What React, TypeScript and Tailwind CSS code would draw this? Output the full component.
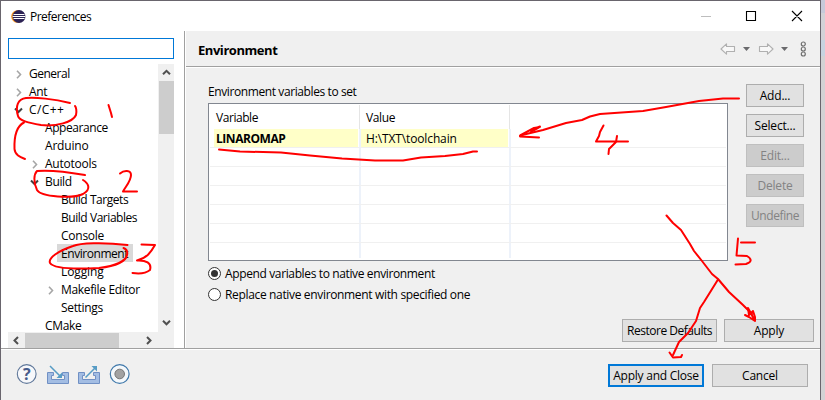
import React from "react";

type Row = {
  label: string;
  indent: string;
  spacing: string;
  arrow?: "closed" | "open";
  selected?: boolean;
};

const rows: Row[] = [
  { label: "General", indent: "pl-[6px]", spacing: "tracking-[-0.5px]", arrow: "closed" },
  { label: "Ant", indent: "pl-[6px]", spacing: "tracking-[-0.34px]", arrow: "closed" },
  { label: "C/C++", indent: "pl-[6px]", spacing: "tracking-[0.4px]", arrow: "open" },
  { label: "Appearance", indent: "pl-[22px]", spacing: "tracking-[-0.42px]" },
  { label: "Arduino", indent: "pl-[22px]", spacing: "tracking-[-0.2px]" },
  { label: "Autotools", indent: "pl-[22px]", spacing: "tracking-[-0.25px]", arrow: "closed" },
  { label: "Build", indent: "pl-[22px]", spacing: "tracking-[-0.34px]", arrow: "open" },
  { label: "Build Targets", indent: "pl-[38px]", spacing: "tracking-[-0.45px]" },
  { label: "Build Variables", indent: "pl-[38px]", spacing: "tracking-[-0.45px]" },
  { label: "Console", indent: "pl-[38px]", spacing: "tracking-[-0.25px]" },
  { label: "Environment", indent: "pl-[38px]", spacing: "tracking-[-0.45px]", selected: true },
  { label: "Logging", indent: "pl-[38px]", spacing: "tracking-[-0.1px]" },
  { label: "Makefile Editor", indent: "pl-[38px]", spacing: "tracking-[-0.34px]", arrow: "closed" },
  { label: "Settings", indent: "pl-[38px]", spacing: "tracking-[-0.34px]" },
  { label: "CMake", indent: "pl-[22px]", spacing: "tracking-[-0.34px]" },
];

function Chevron({ d, color = "#505050", width = 2 }: { d: string; color?: string; width?: number }) {
  return (
    <svg width="9" height="9" viewBox="0 0 9 9" fill="none" stroke={color} strokeWidth={width} className="shrink-0">
      <path d={d} />
    </svg>
  );
}

function Tree() {
  return (
    <div className="h-[268px] w-[150px] overflow-hidden">
      {rows.map((r) => (
        <div key={r.label} className={`flex h-[18px] items-center ${r.indent}`}>
          <div className="flex w-[11px] shrink-0 pt-[2px]">
            {r.arrow === "closed" && <Chevron d="M3 0.8 L6.5 4.5 L3 8.2" color="#a6a6a6" width={1.6} />}
            {r.arrow === "open" && <Chevron d="M1 2.5 L4.5 6 L8 2.5" color="#404040" />}
          </div>
          <div
            className={`flex h-[18px] items-center whitespace-nowrap px-1 pt-[2px] ${r.spacing} ${
              r.selected ? "w-[76px] bg-[#d9d9d9]" : ""
            }`}
          >
            {r.label}
          </div>
        </div>
      ))}
    </div>
  );
}

function Sidebar() {
  return (
    <div className="flex h-[317px] w-[183px] shrink-0 flex-col bg-white pl-[7px] pt-[7px]">
      <div className="h-[21px] w-[166px] shrink-0 border border-[#0078d7] bg-white" />
      <div className="mt-[5px] flex">
        <Tree />
        <div className="flex h-[268px] w-4 flex-col items-center bg-[#f0f0f0]">
          <div className="flex h-[17px] items-center">
            <Chevron d="M1 6.3 L4.5 2.8 L8 6.3" />
          </div>
          <div className="h-[53px] w-[15px] bg-[#cdcdcd]" />
          <div className="mb-[5px] mt-auto">
            <Chevron d="M1 2.8 L4.5 6.3 L8 2.8" />
          </div>
        </div>
      </div>
      <div className="flex h-4 w-[166px] items-center bg-[#f0f0f0]">
        <div className="flex w-[17px] pl-[4px]">
          <Chevron d="M6 1 L2.5 4.5 L6 8" />
        </div>
        <div className="h-[15px] w-[94px] bg-[#cdcdcd]" />
        <div className="ml-[25px]">
          <Chevron d="M3 1 L6.5 4.5 L3 8" />
        </div>
      </div>
    </div>
  );
}

function Button({ children, className = "" }: { children: React.ReactNode; className?: string }) {
  return (
    <button
      className={`flex h-[23px] shrink-0 items-center justify-center whitespace-nowrap border pt-px ${className}`}
    >
      {children}
    </button>
  );
}

function Toolbar() {
  return (
    <svg width="90" height="18" viewBox="0 0 90 18" fill="none">
      <g fill="#f8f8f8" stroke="#b0b0b0" strokeWidth="1.1" strokeLinejoin="round">
        <path d="M1 9 L6.5 3.8 V6.5 H14.5 V11.5 H6.5 V14.2 Z" />
        <path d="M53 9 L47.5 3.8 V6.5 H39.5 V11.5 H47.5 V14.2 Z" />
      </g>
      <path d="M23 7 H30 L26.5 11 Z M61 7 H68 L64.500 11 Z" fill="#6a6a6d" />
      <g stroke="#707070" strokeWidth="1.2">
        <circle cx="83.300" cy="4" r="2" />
        <circle cx="83.300" cy="9" r="2" />
        <circle cx="83.300" cy="14" r="2" />
      </g>
    </svg>
  );
}

function VariableTable() {
  return (
    <div className="flex h-[158px] w-[520px] flex-col border border-[#828790] bg-white">
      <div className="flex h-[25px] items-center pl-[5px]">
        <div className="mt-[1px] flex h-6 w-[146px] items-center border-r border-[#e5e5e5] pl-[2px] pt-px tracking-[-0.45px]">Variable</div>
        <div className="mt-[1px] flex h-6 w-[150px] items-center border-r border-[#e5e5e5] pl-[6px] pt-px tracking-[-0.35px]">Value</div>
      </div>
      <div className="mx-px flex h-[19px] border-b border-[#f0f0f0]">
        <div className="ml-1 flex w-[147px] border-r-2 border-[#edf2fa]">
          <div className="flex w-[144px] items-center bg-[#ffffc8] pl-[2px] pt-[2px] font-bold tracking-[-0.45px]">LINAROMAP</div>
        </div>
        <div className="flex w-[150px] border-r-2 border-[#edf2fa]">
          <div className="flex w-[147px] items-center bg-[#ffffc8] pl-[5px] pt-[2px] tracking-[-0.13px]">H:\TXT\toolchain</div>
        </div>
      </div>
      {[0, 1, 2, 3, 4].map((n) => (
        <div key={n} className="mx-px flex h-[19px] border-b border-[#f0f0f0]">
          <div className="w-[151px] border-r-2 border-[#edf2fa]" />
          <div className="w-[150px] border-r-2 border-[#edf2fa]" />
        </div>
      ))}
      <div className="mx-px flex h-[15px]">
        <div className="w-[151px] border-r-2 border-[#edf2fa]" />
        <div className="w-[150px] border-r-2 border-[#edf2fa]" />
      </div>
    </div>
  );
}

function Radio({ label, checked, spacing }: { label: string; checked?: boolean; spacing: string }) {
  return (
    <div className="flex h-[21px] items-center">
      <div className="flex size-[13px] items-center justify-center rounded-full border border-[#333] bg-white">
        {checked && <div className="size-[7px] rounded-full bg-[#333]" />}
      </div>
      <span className={`ml-[4px] whitespace-nowrap pt-px ${spacing}`}>{label}</span>
    </div>
  );
}

const normal = "border-[#adadad] bg-[#e1e1e1]";
const disabled = "border-[#bfbfbf] bg-[#cccccc] text-[#838383]";

function EnvironmentPage() {
  return (
    <div className="flex h-[317px] w-[634px] flex-col">
      <div className="flex h-9 items-center justify-between border-b border-[#a0a0a0] pl-3 pr-[10px]">
        <span className="pt-[3px] text-[13px] font-bold tracking-[-0.45px]">Environment</span>
        <Toolbar />
      </div>
      <div className="h-px bg-white" />
      <div className="flex pl-[22px]">
        <div className="flex w-[520px] flex-col pt-[13px]">
          <span className="flex h-[22px] items-center tracking-[-0.4px]">Environment variables to set</span>
          <VariableTable />
          <div className="mt-[2px]">
            <Radio label="Append variables to native environment" checked spacing="tracking-[-0.37px]" />
            <Radio label="Replace native environment with specified one" spacing="tracking-[-0.34px]" />
          </div>
        </div>
        <div className="ml-[18px] mt-4 flex w-[58px] flex-col gap-[7px]">
          <Button className={normal}>Add...</Button>
          <Button className={normal}>Select...</Button>
          <Button className={disabled}>Edit...</Button>
          <Button className={disabled}>Delete</Button>
          <Button className={`tracking-[-0.4px] ${disabled}`}>Undefine</Button>
        </div>
      </div>
      <div className="mb-[6px] mr-[6px] mt-auto flex justify-end gap-[7px]">
        <Button className={`w-[95px] tracking-[-0.48px] ${normal}`}>Restore Defaults</Button>
        <Button className={`w-[90px] ${normal}`}>Apply</Button>
      </div>
    </div>
  );
}

function FooterIcons() {
  return (
    <svg width="116" height="24" viewBox="0 0 116 24" fill="none" className="shrink-0">
      <circle cx="10.700" cy="12" r="9.400" fill="#f7f8fb" stroke="#60789a" strokeWidth="1.1" />
      <text x="10.700" y="17.500" textAnchor="middle" fontSize="16" fontWeight="700" fill="#465b8b">?</text>
      <g fill="#a3bde3" stroke="#7090c4">
        <path d="M31.500 10.500 H37.500 V13.500 H35.500 V17.500 H48.500 V13.500 H46.500 V10.500 H52.500 V21.500 H31.500 Z" />
        <path d="M62.500 10.500 H68.500 V13.500 H66.500 V17.500 H79.500 V13.500 H77.500 V10.500 H83.500 V21.500 H62.500 Z" />
      </g>
      <path d="M34 4 L44 14 M69.500 15.500 L79 6" stroke="#579cc5" strokeWidth="1.500" />
      <path d="M46 10.500 V16 H40.500 Z M75.500 4 H81 V9.500 Z" fill="#579cc5" />
      <circle cx="103.700" cy="12" r="9.400" fill="#f4f8fb" stroke="#3f78aa" strokeWidth="1.200" />
      <circle cx="103.700" cy="12" r="4.800" fill="#a2a2a2" stroke="#777" />
    </svg>
  );
}

function Footer() {
  return (
    <div className="flex h-[52px] flex-col border-t border-[#a0a0a0]">
      <div className="h-px shrink-0 bg-white" />
      <div className="flex items-start pl-[15px] pr-3 pt-[12px]">
        <FooterIcons />
        <div className="ml-auto mt-[2px] flex gap-2">
          <Button className="w-24 border-2 border-[#0078d7] bg-[#e1e1e1] tracking-[-0.25px]">Apply and Close</Button>
          <Button className={`w-24 ${normal}`}>Cancel</Button>
        </div>
      </div>
    </div>
  );
}

function TitleBar() {
  return (
    <div className="flex h-[30px] shrink-0 items-center bg-white pl-[10px] pr-[17px]">
      <svg width="15" height="15" viewBox="0 0 15 15">
        <circle cx="6.500" cy="7.500" r="6.300" fill="#f7941e" />
        <circle cx="8" cy="7.500" r="6.500" fill="#2c2255" />
        <path d="M2.500 5.500 H13.500 M1.500 7.500 H14.500 M2.500 9.500 H13.500" stroke="#fff" strokeWidth="1" />
      </svg>
      <span className="ml-[4px] pt-px tracking-[-0.52px]">Preferences</span>
      <svg width="102" height="12" viewBox="0 0 102 12" className="ml-auto" fill="none">
        <path d="M0 6.500 H10" stroke="#bdbdbd" />
        <path d="M45.500 1.500 H54.500 V10.500 H45.500 Z M91 1 L101 11 M101 1 L91 11" stroke="#000" strokeWidth="1.100" />
      </svg>
    </div>
  );
}

function Annotations() {
  return (
    <svg
      className="pointer-events-none absolute inset-0"
      width="825"
      height="400"
      viewBox="0 0 825 400"
      fill="none"
      stroke="#ff0000"
      strokeWidth="2"
      strokeLinecap="round"
      strokeLinejoin="round"
    >
      <path d="M70 103 C54 99 35 97 26 98 C18 99 15 106 18 116 C19 121 30 123 41 125 C56 127 73 122 76 115 C77 111 76 107 75 106" />
      <path d="M108.500 105 L111 113 L112 117" />
      <path d="M24 122.500 C17 126 14 135 14.500 149 C15 155 20 157 25 159" />
      <path d="M85 175 C68 172 48 170 37 171 C34 174 33 182 37 190 C41 197 73 199 83 194 C92 189 88 183 83 180" />
      <path d="M120 173.500 C124 170 131 170 131 175 C131 181 126 186 123 191.500 L137 191.500" />
      <path d="M127.500 245 C103 242 80 243 73 246 C58 251 48 258 50 263 C54 269 80 269 99 268 C116 266 126 261 127 255 C128 251 126 249 123.500 248" />
      <path d="M141.500 244.500 L155 245 C151 252 147 258 137 260.500 C146 260 152 263 150 270 C145 274 139 274 132.500 273" />
      <path d="M219 149.500 L240 151.500 L281 152.500 L310 155.500 L342 158.500 L375 160.500 H403 L421 157.500 L445 156 L463 154 L473 151.500 H477" />
      <path d="M739 98.500 H723 L699 101 L666 107 L643 111 L600 114 L590 116.500 L582 120 L566 123 L543 130 L520 135.500" />
      <path d="M540 126.500 L528 131 L520 136.500 L539 137.500 M521 135 L534 128 L540 127 L531 132" />
      <path d="M603.500 125.500 L600 132 L599 136 L596 141.500 H628 M617 136 L616 142 L609 149 L608.500 154" />
      <path d="M666.500 215.500 L673 223 L681 230 L690 244 L694 251 L702 261 L712 274 L718 279 L729 292 L743 305 L752 314" />
      <path d="M745 315 L749 317 L755 321 L748 308 L749 315 L753 311 L755 317 V321" />
      <path d="M718 279.500 L704 302 L700 308 L696 321 L688 333 L679 342 L673 355" />
      <path d="M669.500 352.500 L673 357.500 L681 357 L682 355" />
      <path d="M738 238.500 L736.500 255.500 L747 256 C752 259 752 262 746 264 L735.500 264.500 M741 242.500 H755" />
    </svg>
  );
}

export default function App() {
  return (
    <div className="relative flex h-[400px] w-[825px] overflow-hidden bg-[#f0f0f0] font-['Open_Sans','Noto_Sans',sans-serif] text-[12px] leading-4 tracking-[-0.2px] text-black">
      <div className="flex h-[400px] w-[821px] flex-col border-x border-t border-[#69656d]">
        <TitleBar />
        <div className="flex h-[317px] shrink-0">
          <Sidebar />
          <div className="w-px bg-[#a0a0a0]" />
          <div className="w-px bg-white" />
          <EnvironmentPage />
        </div>
        <Footer />
      </div>
      <div className="flex w-1 flex-col bg-[#d2d2d4]">
        <div className="h-[13px] bg-[#c6cada]" />
        <div className="h-[27px] bg-[#d2d2d7]" />
        <div className="h-4 bg-[#c7d3e0]" />
      </div>
      <Annotations />
    </div>
  );
}
